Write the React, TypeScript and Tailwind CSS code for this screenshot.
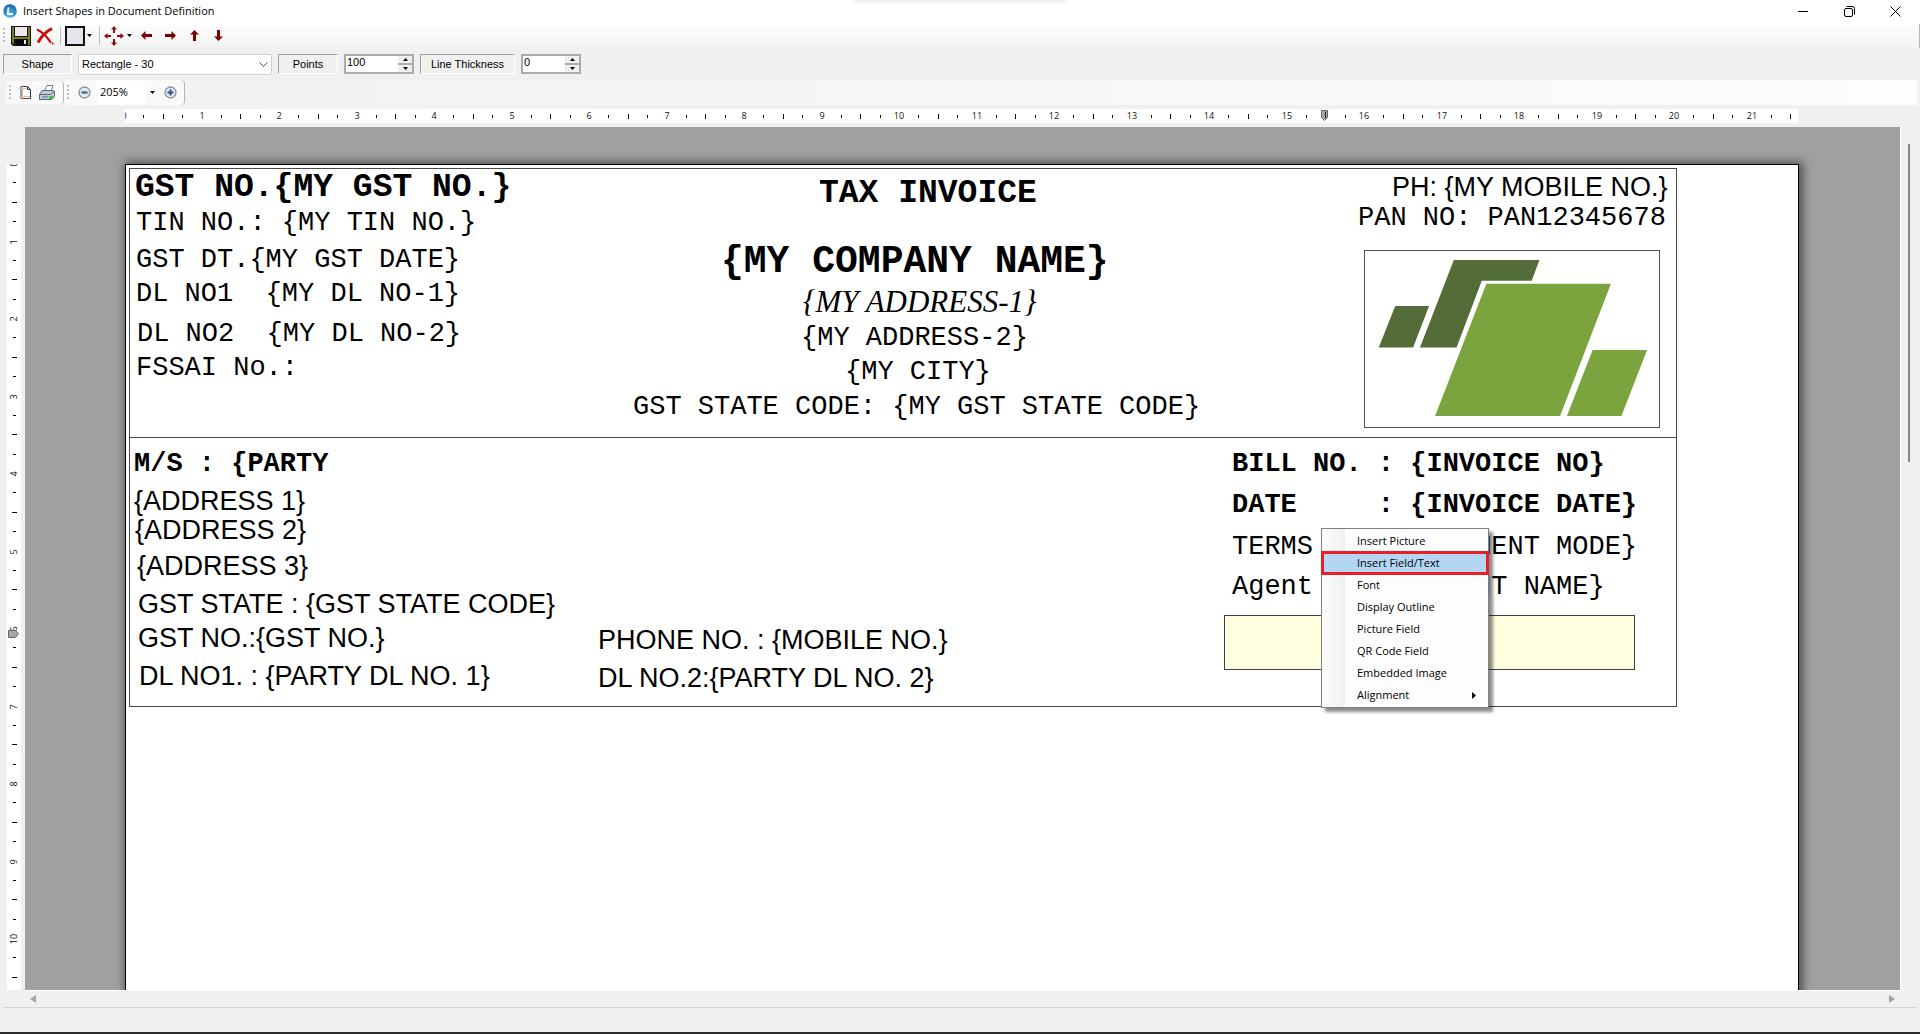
import type { ReactNode } from "react";

const UNIT = 77.5;

type FieldKind = "mono" | "monoBold" | "title" | "company" | "script" | "sans";

const kindClass: Record<FieldKind, string> = {
  mono: "font-['Liberation_Mono',monospace] text-[27px]",
  monoBold: "font-['Liberation_Mono',monospace] text-[27px] font-bold",
  title: "font-['Liberation_Mono',monospace] text-[33px] font-bold",
  company: "font-['Liberation_Mono',monospace] text-[38px] font-bold",
  script: "font-['Liberation_Serif',serif] text-[31px] italic",
  sans: "font-['Liberation_Sans',sans-serif] text-[27px]",
};

/* Fields placed on the design canvas: left and top from the page corner. */
const fields: { x: number; y: number; kind: FieldKind; text: string }[] = [
  { x: 9, y: 6, kind: "title", text: "GST NO.{MY GST NO.}" },
  { x: 10, y: 45, kind: "mono", text: "TIN NO.: {MY TIN NO.}" },
  { x: 10, y: 82, kind: "mono", text: "GST DT.{MY GST DATE}" },
  { x: 10, y: 116, kind: "mono", text: "DL NO1  {MY DL NO-1}" },
  { x: 11, y: 156, kind: "mono", text: "DL NO2  {MY DL NO-2}" },
  { x: 10, y: 190, kind: "mono", text: "FSSAI No.:" },
  { x: 693, y: 12, kind: "title", text: "TAX INVOICE" },
  { x: 595, y: 78, kind: "company", text: "{MY COMPANY NAME}" },
  { x: 677, y: 121, kind: "script", text: "{MY ADDRESS-1}" },
  { x: 675, y: 160, kind: "mono", text: "{MY ADDRESS-2}" },
  { x: 719, y: 194, kind: "mono", text: "{MY CITY}" },
  { x: 507, y: 229, kind: "mono", text: "GST STATE CODE: {MY GST STATE CODE}" },
  { x: 1266, y: 9, kind: "sans", text: "PH: {MY MOBILE NO.}" },
  { x: 1232, y: 40, kind: "mono", text: "PAN NO: PAN12345678" },
  { x: 8, y: 286, kind: "monoBold", text: "M/S : {PARTY" },
  { x: 8, y: 323, kind: "sans", text: "{ADDRESS 1}" },
  { x: 9, y: 352, kind: "sans", text: "{ADDRESS 2}" },
  { x: 11, y: 388, kind: "sans", text: "{ADDRESS 3}" },
  { x: 12, y: 426, kind: "sans", text: "GST STATE : {GST STATE CODE}" },
  { x: 12, y: 460, kind: "sans", text: "GST NO.:{GST NO.}" },
  { x: 13, y: 498, kind: "sans", text: "DL NO1. : {PARTY DL NO. 1}" },
  { x: 472, y: 462, kind: "sans", text: "PHONE NO. : {MOBILE NO.}" },
  { x: 472, y: 500, kind: "sans", text: "DL NO.2:{PARTY DL NO. 2}" },
  { x: 1106, y: 286, kind: "monoBold", text: "BILL NO. : {INVOICE NO}" },
  { x: 1106, y: 327, kind: "monoBold", text: "DATE     : {INVOICE DATE}" },
  { x: 1106, y: 369, kind: "mono", text: "TERMS    : {PAYMENT MODE}" },
  { x: 1106, y: 409, kind: "mono", text: "Agent    : {AGENT NAME}" },
];

const menuItems = [
  "Insert Picture",
  "Insert Field/Text",
  "Font",
  "Display Outline",
  "Picture Field",
  "QR Code Field",
  "Embedded Image",
  "Alignment",
];

function HorizontalRuler() {
  const quarters = Array.from({ length: 87 }, (_, i) => i);
  return (
    <svg width="1673" height="14" className="block bg-white" role="img" aria-label="Horizontal ruler">
      {quarters.map((q) => {
        const x = Math.round((q * UNIT) / 4);
        if (q % 4 === 0)
          return (
            <text key={q} x={x - 1} y="10" fontSize="9" textAnchor="middle" fontFamily="'Open Sans', sans-serif" fill="#111">
              {q / 4}
            </text>
          );
        const long = q % 4 === 2;
        return <rect key={q} x={x - 1} y={long ? 5 : 6} width="1" height={long ? 5 : 3} fill="#000" />;
      })}
      <path d="M1196.5 1.5h6v7l-3 3-3-3z" fill="#a8a8a8" stroke="#666" />
      <path d="M1200.5 3v6" stroke="#222" />
    </svg>
  );
}

function VerticalRuler() {
  const quarters = Array.from({ length: 80 }, (_, i) => i);
  return (
    <svg width="14" height="1600" className="block bg-white" role="img" aria-label="Vertical ruler">
      {quarters.map((q) => {
        const y = Math.round((q * UNIT) / 4);
        if (q % 4 === 0)
          return (
            <text
              key={q}
              transform={`translate(10 ${y}) rotate(-90)`}
              fontSize="9"
              textAnchor="middle"
              fontFamily="'Open Sans', sans-serif"
              fill="#111"
            >
              {q / 4}
            </text>
          );
        const long = q % 4 === 2;
        return <rect key={q} x={long ? 5 : 6} y={y - 1} width={long ? 5 : 3} height="1" fill="#000" />;
      })}
      <path d="M1.500 466.500h7l3 3-3 4h-7z" fill="#a8a8a8" stroke="#666" />
    </svg>
  );
}

function ToolButton({ label, children, className = "" }: { label: string; children: ReactNode; className?: string }) {
  return (
    <button type="button" aria-label={label} title={label} className={`flex shrink-0 items-center justify-center ${className}`}>
      {children}
    </button>
  );
}

function Grip() {
  return (
    <svg width="3" height="15" className="shrink-0" aria-hidden="true">
      {[0, 4, 8, 12].map((y) => (
        <rect key={y} x="0" y={y} width="2" height="2" fill="#bdbdbd" />
      ))}
    </svg>
  );
}

function Caret() {
  return (
    <svg width="5" height="3" className="shrink-0" aria-hidden="true">
      <path d="M0 0h5L2.500 3z" fill="#000" />
    </svg>
  );
}

function ArrowIcon({ turn }: { turn: string }) {
  return (
    <svg width="13" height="13" viewBox="0 0 13 13" className={turn} aria-hidden="true">
      <path d="M1 6.500 5.500 2v3H12v3H5.500v3z" fill="#7d0000" />
    </svg>
  );
}

function Panel({ children, className }: { children: ReactNode; className: string }) {
  return (
    <div
      className={`flex h-5 items-center justify-center border border-t-[#a0a0a0] border-r-white border-b-white border-l-[#a0a0a0] ${className}`}
    >
      {children}
    </div>
  );
}

function Spinner({ id, value, className }: { id: string; value: string; className: string }) {
  return (
    <div className={`flex h-5 border-2 border-[#ababab] bg-white ${className}`}>
      <input id={id} defaultValue={value} className="h-3 w-0 min-w-0 flex-1 bg-white px-px text-[11px] leading-3 outline-none" />
      <div className="flex w-[14px] flex-col bg-[#ababab]">
        <button type="button" aria-label="Increase" className="flex flex-1 items-center justify-center border-b border-[#ababab] bg-[#f0f0f0]">
          <svg width="5" height="3" aria-hidden="true">
            <path d="M0 3h5L2.500 0z" />
          </svg>
        </button>
        <button type="button" aria-label="Decrease" className="flex flex-1 items-center justify-center border-t border-[#ababab] bg-[#f0f0f0]">
          <Caret />
        </button>
      </div>
    </div>
  );
}

function ZoomIcon({ plus }: { plus?: boolean }) {
  return (
    <svg width="13" height="13" viewBox="0 0 13 13" aria-hidden="true">
      <circle cx="6.500" cy="6.500" r="5.500" fill="#dfe7f1" stroke="#8a929c" strokeWidth="1.300" />
      <path d="M3.500 6.500h6" stroke="#35597f" strokeWidth="2" />
      {plus && <path d="M6.500 3.500v6" stroke="#35597f" strokeWidth="2" />}
    </svg>
  );
}

function ContextMenu() {
  return (
    <ul
      role="menu"
      className="absolute top-[363px] left-[1195px] w-[168px] border border-[#808080] bg-linear-to-r from-[#fcfcfc] from-0% via-[#f0f0f0] via-[14%] to-[#fdfdfd] to-[14%] py-px font-['Open_Sans',sans-serif] text-[11px] text-black shadow-[4px_4px_3px_rgba(0,0,0,0.45)]"
    >
      {menuItems.map((item) => {
        const active = item === "Insert Field/Text";
        return (
          <li key={item} role="none">
            <button
              type="button"
              role="menuitem"
              className={
                active
                  ? "flex h-[22px] w-full items-center bg-[#b3d7f3] pl-[35px] outline-3 -outline-offset-2 outline-[#ee1c25]"
                  : "flex h-[22px] w-full items-center justify-between pr-3 pl-[35px]"
              }
            >
              {item}
              {item === "Alignment" && (
                <svg width="4" height="7" aria-hidden="true">
                  <path d="M0 0 4 3.500 0 7z" />
                </svg>
              )}
            </button>
          </li>
        );
      })}
    </ul>
  );
}

function Page() {
  return (
    <div className="relative h-[2200px] w-[1674px] shrink-0 border border-black bg-white shadow-[2px_0_9px_2px_rgba(0,0,0,0.5)]">
      <div className="absolute top-[3px] left-[3px] h-[539px] w-[1548px] border border-[#484848]">
        <div className="h-[269px] border-b border-[#484848]" />
      </div>
      <div className="absolute top-[85px] left-[1238px] h-[178px] w-[296px] border border-[#505050]">
        <svg viewBox="359 512 642 534" preserveAspectRatio="none" className="h-full w-full" role="img" aria-label="Company logo">
          <path d="M425 679h74l-35 126h-75zM553 539h187l-17 63H614l-55 203h-80z" fill="#536c38" />
          <path d="M624 611h272L785 1013H512zM856 812h119l-56 201H800z" fill="#7ca43e" />
        </svg>
      </div>
      <div className="absolute top-[450px] left-[1098px] h-[55px] w-[411px] border border-[#404040] bg-[#ffffe0]" />
      {fields.map((f) => (
        <p key={f.text} className={`absolute leading-none whitespace-pre text-black ${kindClass[f.kind]}`} style={{ left: f.x, top: f.y }}>
          {f.text}
        </p>
      ))}
      <ContextMenu />
    </div>
  );
}

export default function App() {
  return (
    <div className="flex h-screen flex-col overflow-hidden bg-[#f0f0f0] text-black">
      <header className="relative flex h-[23px] shrink-0 items-center overflow-hidden bg-white pr-[19px] pb-px pl-[3px] font-['Open_Sans',sans-serif]">
        <svg width="14" height="14" viewBox="0 0 14 14" aria-hidden="true">
          <defs>
            <radialGradient id="orb" cx="50%" cy="80%" r="75%">
              <stop offset="0" stopColor="#4fc3f5" />
              <stop offset="1" stopColor="#1766ad" />
            </radialGradient>
          </defs>
          <circle cx="7" cy="7" r="6.800" fill="url(#orb)" />
          <path d="M5.500 3.500 4.800 10H10" fill="none" stroke="#fff" strokeWidth="1.800" />
        </svg>
        <h1 className="ml-[6px] text-[11px]">Insert Shapes in Document Definition</h1>
        <span className="absolute -top-px left-1/2 h-px w-[210px] -translate-x-1/2 shadow-[0_0_5px_1px_rgba(0,0,0,0.15)]" />
        <div className="ml-auto flex items-center gap-[35px]">
          <ToolButton label="Minimize" className="h-[11px] w-[11px]">
            <svg width="11" height="11" aria-hidden="true">
              <path d="M0 5.500h10" stroke="#000" />
            </svg>
          </ToolButton>
          <ToolButton label="Restore" className="h-[11px] w-[11px]">
            <svg width="11" height="11" fill="none" stroke="#000" aria-hidden="true">
              <rect x=".5" y="2.500" width="8" height="8" rx="1.500" />
              <path d="M2.500.5h6a2 2 0 0 1 2 2v6" />
            </svg>
          </ToolButton>
          <ToolButton label="Close" className="h-[11px] w-[11px]">
            <svg width="11" height="11" stroke="#000" aria-hidden="true">
              <path d="m.5.5 10 10M10.500.5l-10 10" />
            </svg>
          </ToolButton>
        </div>
      </header>

      <div className="flex h-[29px] shrink-0 items-center bg-linear-to-b from-[#fefefe] to-[#f0f0f0] pb-[4px] pl-[3px]">
        <Grip />
        <ToolButton label="Save" className="ml-[5px] h-5 w-5">
          <svg width="20" height="20" viewBox="0 0 20 20" aria-hidden="true">
            <path d="M0 0h20v20H2l-2-2z" fill="#111" />
            <path d="M1 1h2v10h14V1h2v18h-2v-6H3v5L1 17z" fill="#7b7b1c" />
            <path d="M4 1h12v9H4z" fill="#ece8f0" />
            <path d="M5 13h11v6H5z" fill="#080808" />
            <path d="M13 14h2v4h-2z" fill="#eee" />
          </svg>
        </ToolButton>
        <ToolButton label="Delete" className="ml-[5px] h-[18px] w-[18px]">
          <svg width="18" height="18" viewBox="0 0 18 18" fill="none" stroke="#cc0808" aria-hidden="true">
            <path d="M1 2.500C6 5 12 11 15 16" strokeWidth="2" />
            <path d="M16 1.500C11 4 5 10 2 15.500" strokeWidth="3" />
            <path d="M16 16.500h1.500" strokeWidth="2" />
          </svg>
        </ToolButton>
        <span className="ml-[6px] h-[18px] w-px bg-[#bdbdbd]" />
        <ToolButton label="Draw rectangle" className="ml-1 gap-[2px]">
          <svg width="20" height="20" aria-hidden="true">
            <rect x="1" y="1" width="18" height="18" fill="#e6e6ee" stroke="#111" strokeWidth="2" />
          </svg>
          <Caret />
        </ToolButton>
        <span className="ml-[7px] h-[18px] w-px bg-[#bdbdbd]" />
        <ToolButton label="Move" className="ml-1 gap-[3px]">
          <svg width="20" height="20" viewBox="0 0 20 20" fill="#8a1212" aria-hidden="true">
            <path d="M10 0l3 3.500h-2V7H9V3.500H7zM10 20l-3-3.500h2V13h2v3.500h2zM0 10l3.500-3v2H7v2H3.500v2zM20 10l-3.500 3v-2H13V9h3.500V7z" />
          </svg>
          <Caret />
        </ToolButton>
        <div className="ml-2 flex gap-[11px]">
          <ToolButton label="Move left">
            <ArrowIcon turn="rotate-0" />
          </ToolButton>
          <ToolButton label="Move right">
            <ArrowIcon turn="rotate-180" />
          </ToolButton>
          <ToolButton label="Move up">
            <ArrowIcon turn="rotate-90" />
          </ToolButton>
          <ToolButton label="Move down">
            <ArrowIcon turn="-rotate-90" />
          </ToolButton>
        </div>
        <span className="ml-auto h-6 w-px bg-[#b8b8b8]" />
      </div>

      <div className="flex h-7 shrink-0 items-start gap-[6px] pt-[2px] pl-[3px] font-['Liberation_Sans',sans-serif] text-[11px]">
        <Panel className="w-[69px]">
          <label htmlFor="shape">Shape</label>
        </Panel>
        <div className="relative w-[194px]">
          <select
            id="shape"
            className="h-[21px] w-full appearance-none rounded-xs border border-[#d0d0d0] bg-white pl-[3px] text-[11px] leading-[19px]"
          >
            <option>Rectangle - 30</option>
          </select>
          <svg width="9" height="5" className="pointer-events-none absolute top-2 right-1" fill="none" stroke="#555" aria-hidden="true">
            <path d="m.5.5 4 4 4-4" />
          </svg>
        </div>
        <Panel className="w-[60px]">
          <label htmlFor="points">Points</label>
        </Panel>
        <Spinner id="points" value="100" className="w-[70px]" />
        <Panel className="w-[95px]">
          <label htmlFor="thickness">Line Thickness</label>
        </Panel>
        <Spinner id="thickness" value="0" className="w-[60px]" />
      </div>

      <div className="mr-[3px] ml-[6px] flex h-[25px] shrink-0 items-center bg-linear-to-r from-[#f0f0f0] to-[#fdfdfd] font-['Open_Sans',sans-serif]">
        <div className="flex h-[23px] w-[58px] items-center rounded-sm border-r border-[#b5b5b5] bg-[#f9f9f9] pl-[3px]">
          <Grip />
          <ToolButton label="Page setup" className="ml-[7px]">
            <svg width="13" height="15" aria-hidden="true">
              <path d="M2 1.500h6.500l3 3v9H2z" fill="#fff" stroke="#34435e" />
              <path d="M3.500 0v15M0 3.500h8M0 11.500h13" stroke="#eeb48c" />
              <path d="M11.500 4.500v9" stroke="#34435e" />
              <path d="M8.500 1.500v3h3z" fill="#cdd6e4" stroke="#34435e" />
            </svg>
          </ToolButton>
          <ToolButton label="Print" className="ml-[7px]">
            <svg width="16" height="15" aria-hidden="true">
              <path d="M5.500 5.500 8 .5h6l-2 6z" fill="#fff" stroke="#6d7c92" />
              <path d="M.5 9.500 3 5.500h11l1.500 1v5l-3 3H.5z" fill="#c3cad6" stroke="#59667b" />
              <path d="M.5 9.500h11l3.500-3M3 12h6" fill="none" stroke="#59667b" />
              <path d="M10 11h4v3h-4z" fill="#35c438" />
            </svg>
          </ToolButton>
        </div>
        <div className="flex h-[25px] w-[121px] items-center rounded-sm border-r border-[#b5b5b5] bg-[#f9f9f9] pl-[3px]">
          <Grip />
          <ToolButton label="Zoom out" className="ml-2">
            <ZoomIcon />
          </ToolButton>
          <select aria-label="Zoom level" className="ml-[6px] h-6 w-12 appearance-none bg-white pl-[3px] text-[11px]">
            <option>205%</option>
          </select>
          <span className="mx-[5px]">
            <Caret />
          </span>
          <ToolButton label="Zoom in" className="ml-1">
            <ZoomIcon plus />
          </ToolButton>
        </div>
      </div>

      <div className="flex shrink-0 justify-center overflow-hidden py-1 pr-[21px] pl-[25px]">
        <div className="w-[1674px] shrink-0">
          <HorizontalRuler />
        </div>
      </div>

      <main className="flex min-h-0 flex-1">
        <div className="w-[25px] shrink-0 overflow-hidden pt-[37px] pl-[7px]">
          <VerticalRuler />
        </div>
        <div className="flex min-w-0 flex-1 justify-center overflow-hidden bg-[#a0a0a0] pt-[37px] pr-px">
          <Page />
        </div>
        <div className="w-5 shrink-0 border-l border-white pt-[17px] pl-[7px]">
          <div className="h-[318px] w-[2px] bg-[#868686]" />
        </div>
      </main>

      <div className="mr-[19px] ml-[25px] h-px shrink-0 bg-white" />
      <div className="flex h-4 shrink-0 items-center justify-between pr-[25px] pl-[30px]">
        <ToolButton label="Scroll left">
          <svg width="6" height="8" aria-hidden="true">
            <path d="M6 0v8L0 4z" fill="#a3a3a3" />
          </svg>
        </ToolButton>
        <ToolButton label="Scroll right">
          <svg width="6" height="8" aria-hidden="true">
            <path d="M0 0v8l6-4z" fill="#a3a3a3" />
          </svg>
        </ToolButton>
      </div>
      <footer className="h-[27px] shrink-0 border-b-2 border-[#2b2b2b] px-[3px]">
        <div className="h-px bg-[#d7d7d7]" />
      </footer>
    </div>
  );
}
